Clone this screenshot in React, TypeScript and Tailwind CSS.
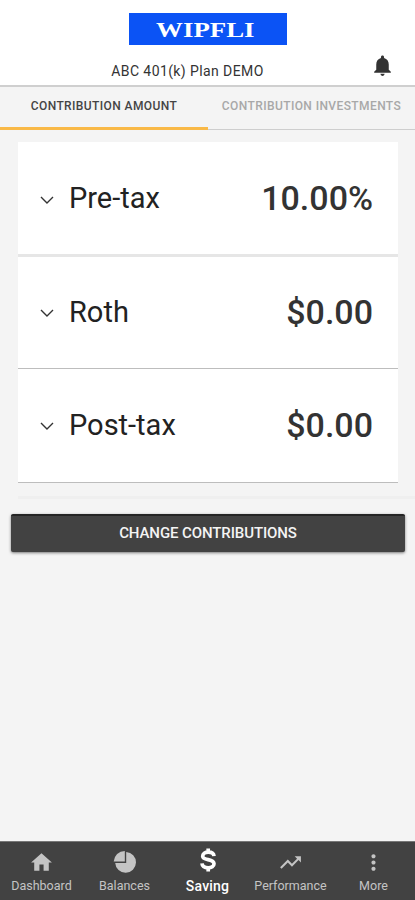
import { MdHome, MdMoreVert, MdNotifications, MdTrendingUp } from "react-icons/md"

const contributions = [
    { name: "Pre-tax", amount: "10.00%", style: "h-[115px] pb-0 border-b-[3px] border-[#e6e6e6]" },
    { name: "Roth", amount: "$0.00", style: "h-[112px] pb-[2px] border-b border-[#bdbdbd]" },
    { name: "Post-tax", amount: "$0.00", style: "h-[114px] pb-[2px] border-b border-[#bdbdbd]" },
]

const navItems = [
    { label: "Dashboard", icon: <MdHome size={25} /> },
    { label: "Balances", icon: <PieIcon /> },
    { label: "Saving", icon: <DollarIcon />, active: true },
    { label: "Performance", icon: <MdTrendingUp size={25} /> },
    { label: "More", icon: <MdMoreVert size={25} /> },
]

export default function App() {
    return (
        <div className="w-[415px] h-[900px] flex flex-col overflow-hidden bg-[#f4f4f4] text-[#333] font-['Roboto',sans-serif]">
            <Header />
            <Tabs />
            <main className="flex-1 flex flex-col">
                <div className="mt-3 ml-[18px] w-[380px] flex flex-col">
                    {contributions.map((v) => <ContributionRow key={v.name} item={v} />)}
                </div>
                <div className="mt-[13px] ml-[18px] h-[3px] bg-[#efefef]" />
                <button className="mt-[15px] ml-[11px] w-[394px] h-[38px] pb-[2px] rounded-[2px] border-t-2 border-[#252525] bg-[#424242] text-[#f4f4f4] text-[15px] leading-none font-medium tracking-[-0.1px] shadow-[0_1px_3px_rgba(0,0,0,0.5)]">
                    CHANGE CONTRIBUTIONS
                </button>
            </main>
            <BottomNav />
        </div>
    )
}

function Header() {
    return (
        <header className="relative h-[87px] shrink-0 flex flex-col items-center bg-white border-b-2 border-[#cfcfcf]">
            <div className="mt-[13px] w-[158px] h-[32px] flex items-center justify-center bg-[#0b53f5] text-white">
                <span className="mt-px mr-[5px] font-['Liberation_Serif',serif] font-bold text-[22px] leading-none scale-x-[1.22]">WIPFLI</span>
            </div>
            <p className="mt-[16px] pr-[40px] text-[14px] leading-5 tracking-[0.4px] whitespace-nowrap">ABC 401(k) Plan DEMO</p>
            <MdNotifications size={25} className="absolute left-[370px] top-[53px] text-[#333]" />
        </header>
    )
}

function Tabs() {
    return (
        <nav className="h-[43px] shrink-0 flex text-[12px] leading-4 tracking-[0.4px] whitespace-nowrap">
            <div className="w-[208px] flex justify-center pt-[11px] border-b-[3px] border-[#f9b947] font-medium text-[#444]">CONTRIBUTION AMOUNT</div>
            <div className="flex-1 flex justify-center pt-[11px] border-b border-[#cecece] font-medium text-[#a8a8a8]">CONTRIBUTION INVESTMENTS</div>
        </nav>
    )
}

const ContributionRow = (props: any) => {
    return (
        <div className={`flex items-center pl-[22px] pr-[25px] bg-white ${props.item.style}`}>
            <svg width="14" height="10" viewBox="0 0 14 10" fill="none" stroke="#333" strokeWidth="1.4" className="mt-[3px]">
                <path d="M1 2L7 8L13 2" />
            </svg>
            <span className="ml-[15px] text-[29px] leading-9 text-[#222]">{props.item.name}</span>
            <span className="ml-auto text-[34px] leading-10 font-medium">{props.item.amount}</span>
        </div>
    )
}

function BottomNav() {
    return (
        <nav className="h-[59px] shrink-0 flex bg-[#424242] border-t border-[#777]">
            {navItems.map((v) => (
                <div key={v.label} className={`w-[83px] flex flex-col items-center ${v.active ? "text-white" : "text-[#c4c4c4]"}`}>
                    <div className={`h-6 flex items-center ${v.active ? "mt-[6px]" : "mt-[8px]"}`}>{v.icon}</div>
                    <span className={`leading-4 whitespace-nowrap ${v.active ? "mt-[6px] text-[14px] font-medium tracking-[0.2px]" : "mt-[4px] text-[12.5px]"}`}>{v.label}</span>
                </div>
            ))}
        </nav>
    )
}

function PieIcon() {
    return (
        <svg width="24" height="24" viewBox="0 0 24 24" fill="currentColor">
            <path d="M13.2 2A10.4 10.4 0 1 1 2.2 13H13.2Z" />
            <path d="M11.8.9V11.6H.7A11.2 11.2 0 0 1 11.8.9Z" />
        </svg>
    )
}

function DollarIcon() {
    return (
        <svg width="20" height="26" viewBox="0 0 20 26" fill="none" stroke="currentColor" strokeWidth="3.7">
            <path d="M16 9.2C15.8 6.5 13.5 5.2 10.3 5.2C7 5.2 4.7 6.7 4.7 9.2C4.7 13.8 16 11.5 16 16.8C16 19.3 13.5 20.8 10.3 20.8C6.5 20.8 4.2 19.1 4 16.4M10.2 1.5V5M10.2 21V24.5" />
        </svg>
    )
}
